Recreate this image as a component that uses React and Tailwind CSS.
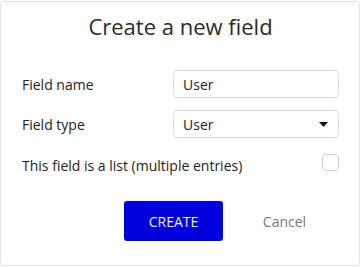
const Row = ({ label, children }) => (
  <div className="flex h-[28px] items-center justify-between">
    <span className="text-[14px] text-[#222]">{label}</span>
    {children}
  </div>
);

export default function App() {
  return (
    <div className="h-[267px] w-[360px] bg-white pt-[1px] font-['Open_Sans',sans-serif]">
      <div className="h-[265px] w-[360px] rounded-[3px] border border-[#e3e3e3] bg-white pl-[21px] pr-[20px] pt-[9px]">
        <h1 className="text-center text-[22px] leading-[30px] text-[#2b2b2b]">Create a new field</h1>
        <div className="mt-[29px] flex flex-col">
          <Row label="Field name">
            <div className="flex h-[28px] w-[166px] items-center rounded-[4px] border border-[#dcdcdc] px-[9px] text-[14px] text-[#222]">
              User
            </div>
          </Row>
          <div className="mt-[12px]">
            <Row label="Field type">
              <div className="flex h-[28px] w-[166px] items-center justify-between rounded-[4px] border border-[#dcdcdc] pl-[9px] pr-[10px] text-[14px] text-[#222]">
                <span>User</span>
                <svg width="9" height="5" viewBox="0 0 9 5">
                  <path d="M0 0h9L4.5 5z" fill="#111" />
                </svg>
              </div>
            </Row>
          </div>
          <div className="mt-[16px] flex items-start justify-between">
            <span className="mt-[2px] text-[14px] leading-[20px] text-[#222]">This field is a list (multiple entries)</span>
            <div className="h-[17px] w-[17px] rounded-[4px] border border-[#d0d0d0] bg-white" />
          </div>
        </div>
        <div className="mt-[25px] flex items-center">
          <button className="ml-[102px] h-[40px] w-[99px] rounded-[3px] bg-[#0000dd] text-[14px] text-[#eeeeff]">
            CREATE
          </button>
          <button className="ml-[12px] h-[40px] w-[99px] text-[14px] text-[#777]">Cancel</button>
        </div>
      </div>
    </div>
  );
}
